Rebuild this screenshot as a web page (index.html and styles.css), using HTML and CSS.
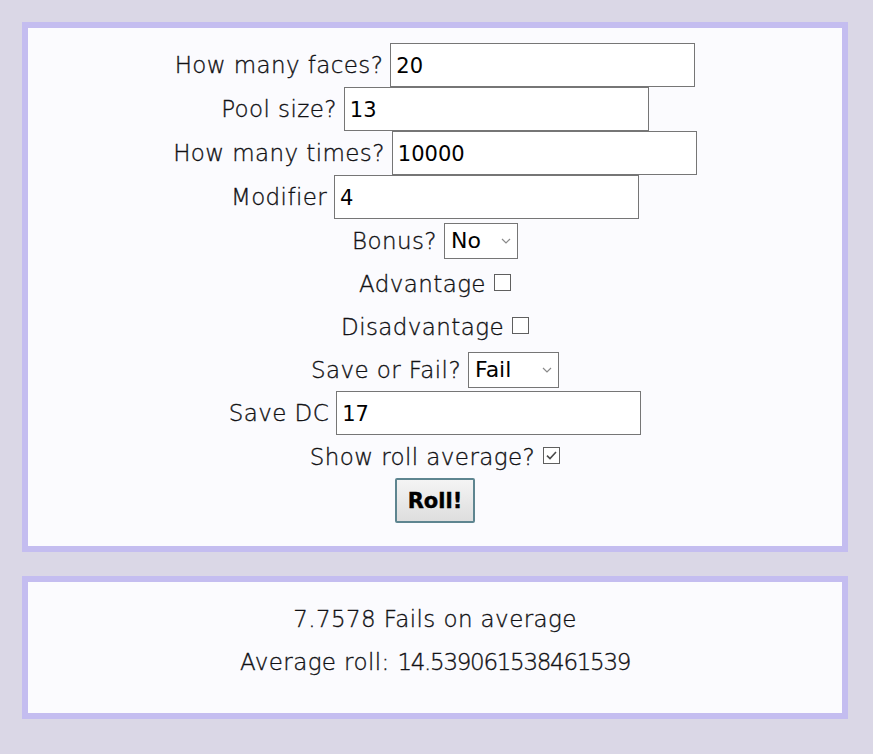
FILE: index.html
```html
<!DOCTYPE html>
<html lang="en">
<head>
<meta charset="utf-8">
<title>Dice pool roller</title>
<link rel="stylesheet" href="styles.css">
</head>
<body>
<div class="page">
  <form class="card form" onsubmit="return false;">
    <div class="row"><label for="faces">How many faces?</label><input id="faces" class="num" type="text" value="20"></div>
    <div class="row"><label for="pool">Pool size?</label><input id="pool" class="num" type="text" value="13"></div>
    <div class="row"><label for="times">How many times?</label><input id="times" class="num" type="text" value="10000"></div>
    <div class="row"><label for="mod">Modifier</label><input id="mod" class="num" type="text" value="4"></div>
    <div class="row short"><label for="bonus">Bonus?</label>
      <span class="sel-wrap sel-no"><select id="bonus" class="sel"><option>No</option><option>Yes</option></select><svg class="chev" width="10" height="6" viewBox="0 0 10 6"><path d="M1 1 L5 5 L9 1" fill="none" stroke="#8a8a8a" stroke-width="1.2"/></svg></span></div>
    <div class="row short"><label class="cb" for="adv">Advantage<input id="adv" class="check" type="checkbox"><span class="box"></span></label></div>
    <div class="row short"><label class="cb" for="dis">Disadvantage<input id="dis" class="check" type="checkbox"><span class="box"></span></label></div>
    <div class="row short"><label for="sf">Save or Fail?</label>
      <span class="sel-wrap sel-fail"><select id="sf" class="sel"><option>Save</option><option selected>Fail</option></select><svg class="chev" width="10" height="6" viewBox="0 0 10 6"><path d="M1 1 L5 5 L9 1" fill="none" stroke="#8a8a8a" stroke-width="1.2"/></svg></span></div>
    <div class="row"><label for="dc">Save DC</label><input id="dc" class="num" type="text" value="17"></div>
    <div class="row short"><label class="cb" for="avg">Show roll average?<input id="avg" class="check" type="checkbox" checked><span class="box"><svg class="tick" width="13" height="13" viewBox="0 0 13 13"><path d="M2 6.6 L5 9.6 L11 3" fill="none" stroke="#4a4a4a" stroke-width="1.6"/></svg></span></label></div>
    <div class="row btn-row"><button class="roll" type="button">Roll!</button></div>
  </form>
  <div class="card result">
    <p class="line">7.7578 Fails on average</p>
    <p class="line">Average roll: <span class="digits">14.539061538461539</span></p>
  </div>
</div>
</body>
</html>
```

FILE: styles.css
```css
html, body {
  margin: 0;
  padding: 0;
  background: #dad7e6;
}
body {
  font-family: "DejaVu Sans", "Open Sans", sans-serif;
  font-weight: 200;
  font-size: 23px;
  letter-spacing: 0.4px;
  color: #111114;
  -webkit-text-stroke: 0.35px #111114;
}
.page {
  padding: 22px 25px 0 22px;
  display: flex;
  flex-direction: column;
  gap: 24px;
}
.card {
  border: 6px solid #c4bdf0;
  background: #fbfbfe;
  margin: 0;
}
.form {
  padding: 15px 0 23px;
  display: flex;
  flex-direction: column;
}
.row {
  height: 44px;
  display: flex;
  justify-content: center;
  align-items: center;
  gap: 7px;
}
.row.short {
  height: 43px;
}
.btn-row {
  height: 45px;
}
.num {
  box-sizing: border-box;
  width: 305px;
  height: 44px;
  margin: 0;
  padding: 2px 5px 0;
  border: 1px solid #767676;
  background: #ffffff;
  font-family: "DejaVu Sans", sans-serif;
  font-weight: 400;
  font-size: 21px;
  letter-spacing: 0;
  -webkit-text-stroke: 0;
  color: #000;
}
.sel-wrap {
  position: relative;
  display: inline-block;
  height: 36px;
}
.sel-no { width: 74px; }
.sel-fail { width: 91px; }
.sel {
  -webkit-appearance: none;
  appearance: none;
  box-sizing: border-box;
  width: 100%;
  height: 36px;
  margin: 0;
  padding: 0 0 0 6px;
  border: 1px solid #767676;
  border-radius: 0;
  background: #ffffff;
  font-family: "DejaVu Sans", sans-serif;
  font-weight: 400;
  font-size: 22px;
  letter-spacing: 0;
  -webkit-text-stroke: 0;
  color: #000;
}
.chev {
  position: absolute;
  right: 7px;
  top: 15px;
  pointer-events: none;
}
.cb {
  display: inline-flex;
  align-items: center;
  gap: 8px;
}
.check {
  position: absolute;
  opacity: 0;
  width: 0;
  height: 0;
  margin: 0;
}
.box {
  box-sizing: border-box;
  width: 17px;
  height: 17px;
  border: 1.5px solid #5f5f5f;
  background: #ffffff;
  display: inline-flex;
  align-items: center;
  justify-content: center;
  margin-bottom: 3px;
}
.roll {
  box-sizing: border-box;
  width: 80px;
  height: 45px;
  border: 2px solid #5e8590;
  border-radius: 2px;
  background: linear-gradient(#f4f4f4, #dedede);
  font-family: "DejaVu Sans", sans-serif;
  font-weight: 700;
  font-size: 21px;
  letter-spacing: 0;
  -webkit-text-stroke: 0.4px #000;
  color: #000;
  padding: 0;
}
.result {
  padding: 16px 0 29px;
  text-align: center;
}
.line {
  margin: 0;
  height: 43px;
  line-height: 43px;
}
.digits {
  letter-spacing: -1.3px;
}
```
